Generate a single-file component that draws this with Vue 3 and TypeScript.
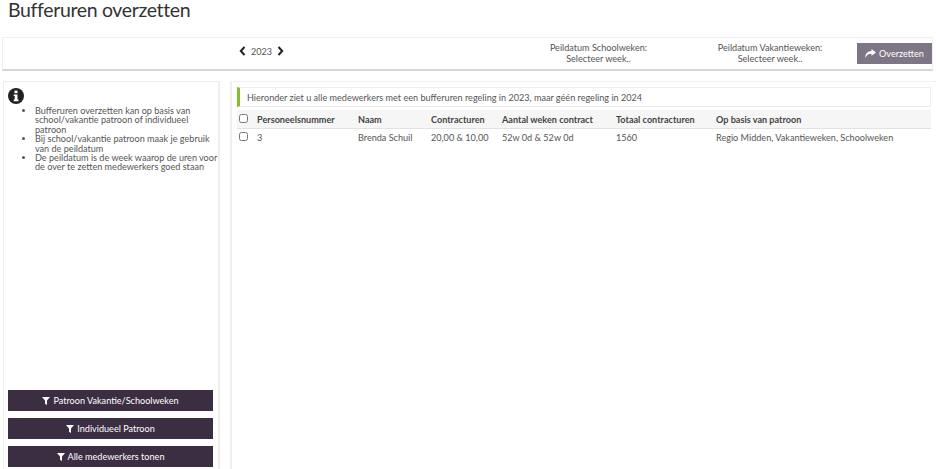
<script setup lang="ts">
const tips: string[][] = [
  ['Bufferuren overzetten kan op basis van', 'school/vakantie patroon of individueel', 'patroon'],
  ['Bij school/vakantie patroon maak je gebruik', 'van de peildatum'],
  ['De peildatum is de week waarop de uren voor', 'de over te zetten medewerkers goed staan'],
]
const filters: string[] = ['Patroon Vakantie/Schoolweken', 'Individueel Patroon', 'Alle medewerkers tonen']
const columns: string[] = ['Personeelsnummer', 'Naam', 'Contracturen', 'Aantal weken contract', 'Totaal contracturen', 'Op basis van patroon']
const cells: string[] = ['3', 'Brenda Schuil', '20,00 & 10,00', '52w 0d & 52w 0d', '1560', 'Regio Midden, Vakantieweken, Schoolweken']
</script>

<template>
  <div class="page">
    <h1 class="title">Bufferuren overzetten</h1>
    <div class="toolbar">
      <div class="year">
        <svg width="7" height="10" viewBox="0 0 7 10"><path d="M5.5 1 1.8 5l3.7 4" fill="none" stroke="#222" stroke-width="2"/></svg>
        <span>2023</span>
        <svg width="7" height="10" viewBox="0 0 7 10"><path d="M1.5 1 5.2 5 1.5 9" fill="none" stroke="#222" stroke-width="2"/></svg>
      </div>
      <div class="peil school">Peildatum Schoolweken:<br />Selecteer week..</div>
      <div class="peil vakantie">Peildatum Vakantieweken:<br />Selecteer week..</div>
      <button class="transfer">
        <svg width="11" height="9" viewBox="0 0 11 9"><path d="M6.5 0 11 3.4 6.5 6.8V4.7C3.6 4.7 1.6 5.6.4 9 .1 4.800 2.500 2.300 6.500 2.100z" fill="#fff"/></svg>
        Overzetten
      </button>
    </div>
    <div class="columns">
      <aside class="side">
        <svg class="info" width="16" height="16" viewBox="0 0 16 16">
          <circle cx="8" cy="8" r="8" fill="#222"/>
          <rect x="6.500" y="2.600" width="3" height="2.600" fill="#fff"/>
          <path d="M5.700 6.400h3.800v5.200h1v1.600H5.700v-1.600h1V8H5.700z" fill="#fff"/>
        </svg>
        <ul class="tips">
          <li v-for="tip in tips" :key="tip[0]">
            <span v-for="line in tip" :key="line" class="tip-line">{{ line }}</span>
          </li>
        </ul>
        <div class="filters">
          <button v-for="f in filters" :key="f" class="filter">
            <svg width="8" height="8" viewBox="0 0 8 8"><path d="M0 0h8L5 3.600V8L3 6.800V3.600z" fill="#fff"/></svg>
            {{ f }}
          </button>
        </div>
      </aside>
      <main class="content">
        <div class="notice">Hieronder ziet u alle medewerkers met een bufferuren regeling in 2023, maar géén regeling in 2024</div>
        <div class="grid head">
          <span class="check"><input type="checkbox" /></span>
          <span v-for="c in columns" :key="c">{{ c }}</span>
        </div>
        <div class="grid row">
          <span class="check"><input type="checkbox" /></span>
          <span v-for="c in cells" :key="c">{{ c }}</span>
        </div>
      </main>
    </div>
  </div>
</template>

<style>
html, body { margin: 0; background: #fff; overflow: hidden; }
</style>

<style scoped>
.page {
  width: 936px;
  height: 469px;
  overflow: hidden;
  font-family: Lato, "Noto Sans", sans-serif;
  font-size: 9.1px;
  color: #555;
  display: flex;
  flex-direction: column;
}
.title {
  margin: 0;
  height: 37px;
  padding: 0 0 0 8px;
  box-sizing: border-box;
  font-size: 19.500px;
  letter-spacing: -0.35px;
  line-height: 20px;
  font-weight: 400;
  color: #333;
}
.toolbar {
  height: 31px;
  margin: 0 3px 0 2px;
  border: 1px solid #efefef;
  border-bottom: 2px solid #d6d6d6;
  display: flex;
  align-items: center;
}
.year {
  margin-left: 236px;
  margin-bottom: 5px;
  width: 45px;
  display: flex;
  align-items: center;
  justify-content: space-between;
}
.peil {
  text-align: center;
  line-height: 10.7px;
  white-space: nowrap;
}
.school { margin-left: 264.500px; width: 100px; }
.vakantie { margin-left: 68.500px; width: 106px; }
.transfer {
  margin-left: 34px;
  width: 75px;
  height: 21px;
  border: 0;
  background: #7e7684;
  color: #fff;
  font: inherit;
  padding: 0;
  display: flex;
  align-items: center;
  justify-content: center;
  gap: 3px;
}
.columns {
  display: flex;
  margin-top: 10px;
  flex: 1;
  min-height: 0;
}
.side {
  width: 217px;
  margin-left: 3px;
  box-sizing: border-box;
  border: 1px solid #efefef;
  border-width: 1px 2px 0 1px;
  padding: 6px 1px 0 4px;
  display: flex;
  flex-direction: column;
}
.info { display: block; }
.tips {
  margin: 2px 0 0;
  padding: 0 0 0 27px;
  line-height: 9.400px;
  flex: 1;
}
.tip-line {
  display: block;
  white-space: nowrap;
}
.filters {
  display: flex;
  flex-direction: column;
  gap: 7px;
  margin-bottom: 2px;
}
.filter {
  height: 21px;
  width: 205px;
  border: 0;
  padding: 0;
  background: #3b2d42;
  color: #fff;
  font: inherit;
  display: flex;
  align-items: center;
  justify-content: center;
  gap: 3px;
}
.content {
  margin-left: 10px;
  flex: 1;
  border: 1px solid #efefef;
  border-width: 1px 0 0 2px;
  padding: 5px 5px 0 5px;
}
.notice {
  height: 20px;
  line-height: 20px;
  box-sizing: border-box;
  border: 1px solid #efefef;
  border-left: 3px solid #84bd2f;
  padding-left: 7px;
}
.grid {
  display: grid;
  grid-template-columns: 20px 101px 73px 71px 114px 100px 1fr;
  align-items: center;
  white-space: nowrap;
}
.head {
  margin-top: 3px;
  height: 18px;
  background: #f6f6f6;
  border-bottom: 1px solid #e2e2e2;
  font-weight: 700;
  color: #444;
}
.row { height: 17px; }
.check { display: flex; padding-left: 2px; }
.check input { margin: -2px 0 0; width: 9px; height: 9px; }
</style>
